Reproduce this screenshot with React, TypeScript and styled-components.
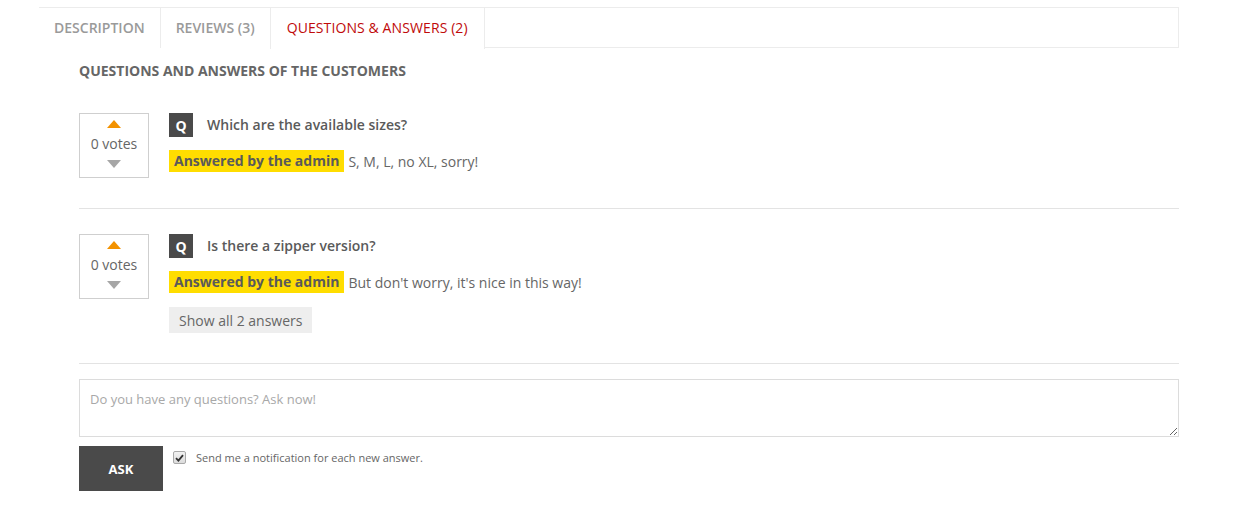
import React from "react";
import styled, { createGlobalStyle } from "styled-components";

const Global = createGlobalStyle`
  html, body { margin: 0; padding: 0; background: #fff; }
  body { font-family: "Open Sans", "Noto Sans", sans-serif; color: #666; }
  * { box-sizing: border-box; }
`;

const Page = styled.div`
  padding: 7px 0 0 39px;
  width: 1179px;
`;

const TabBar = styled.div`
  display: flex;
  height: 41px;
  border: 1px solid #ececec;
`;

const Tab = styled.div<{ $active?: boolean }>`
  display: flex;
  align-items: center;
  padding: 0 ${(p) => (p.$active ? "16px" : "15px")} ${(p) => (p.$active ? "3px" : "1px")};
  margin-left: -1px;
  border-left: 1px solid #ececec;
  border-right: 1px solid #ececec;
  font-size: 14px;
  font-weight: ${(p) => (p.$active ? 400 : 600)};
  letter-spacing: ${(p) => (p.$active ? "0.1px" : "0")};
  text-transform: uppercase;
  color: ${(p) => (p.$active ? "#c00a0a" : "#9a9a9a")};
  background: #fff;
  height: ${(p) => (p.$active ? "41px" : "40px")};
  margin-bottom: ${(p) => (p.$active ? "-1px" : "0")};
  &:first-child { border-left: none; padding-left: 15px; }
`;

const Content = styled.div`
  padding-left: 40px;
`;

const Heading = styled.h3`
  margin: 14px 0 0;
  font-size: 14px;
  font-weight: 700;
  line-height: 18px;
  color: #666;
  text-transform: uppercase;
`;

const Item = styled.div<{ $first?: boolean }>`
  display: flex;
  padding: ${(p) => (p.$first ? "33px" : "25px")} 0 30px;
  border-bottom: 1px solid #e3e3e3;
`;

const VoteBox = styled.div`
  width: 70px;
  height: 65px;
  flex: none;
  border: 1px solid #cfcfcf;
  display: flex;
  flex-direction: column;
  align-items: center;
  padding-top: 6px;
`;

const Arrow = styled.span<{ $up?: boolean }>`
  width: 0;
  height: 0;
  border-left: 7px solid transparent;
  border-right: 7px solid transparent;
  ${(p) =>
    p.$up
      ? "border-bottom: 8px solid #f39200;"
      : "border-top: 8px solid #a6a6a6;"}
`;

const Votes = styled.span`
  font-size: 14px;
  line-height: 20px;
  margin: 6px 0 6px;
  color: #666;
`;

const Body = styled.div`
  margin-left: 20px;
  display: flex;
  flex-direction: column;
  align-items: flex-start;
`;

const QRow = styled.div`
  display: flex;
  align-items: center;
`;

const QBadge = styled.span`
  width: 24px;
  height: 24px;
  background: #4a4a4a;
  color: #fff;
  font-weight: 700;
  font-size: 14px;
  display: flex;
  align-items: center;
  justify-content: center;
`;

const QText = styled.span`
  margin-left: 14px;
  font-size: 14px;
  font-weight: 600;
  color: #5a5a5a;
  margin-top: -2px;
`;

const ARow = styled.div`
  display: flex;
  align-items: center;
  margin-top: 13px;
`;

const ABadge = styled.span`
  background: #ffdd00;
  padding: 0 5px;
  height: 22px;
  line-height: 22px;
  font-size: 14px;
  font-weight: 700;
  color: #5a5a5a;
`;

const AText = styled.span`
  margin-left: 4px;
  font-size: 14px;
  color: #666;
`;

const ShowAll = styled.button`
  margin-top: 14px;
  background: #eeeeee;
  border: none;
  height: 26px;
  padding: 0 10px;
  font-family: inherit;
  font-size: 14px;
  color: #666;
`;

const Form = styled.div`
  padding-top: 15px;
`;

const TextArea = styled.textarea`
  display: block;
  width: 100%;
  height: 58px;
  border: 1px solid #dcdcdc;
  padding: 10px;
  font-family: inherit;
  font-size: 13px;
  resize: vertical;
  &::placeholder { color: #a8a8a8; }
`;

const Actions = styled.div`
  display: flex;
  align-items: flex-start;
  margin-top: 9px;
`;

const AskButton = styled.button`
  width: 84px;
  height: 45px;
  background: #4a4a4a;
  color: #fff;
  border: none;
  font-family: inherit;
  font-weight: 700;
  font-size: 13px;
`;

const Check = styled.label`
  display: flex;
  align-items: center;
  margin-left: 10px;
  margin-top: 4px;
  font-size: 11px;
  color: #666;
`;

const CheckBox = styled.span`
  width: 13px;
  height: 13px;
  margin-right: 10px;
  border: 1px solid #a9a9a9;
  border-radius: 2px;
  background: linear-gradient(#f2f2f2, #dcdcdc);
  display: flex;
  align-items: center;
  justify-content: center;
`;

const items = [
  { q: "Which are the available sizes?", a: "S, M, L, no XL, sorry!", more: false },
  { q: "Is there a zipper version?", a: "But don't worry, it's nice in this way!", more: true },
];

export default function App() {
  return (
    <>
      <Global />
      <Page>
        <TabBar>
          <Tab>Description</Tab>
          <Tab>Reviews (3)</Tab>
          <Tab $active>Questions &amp; Answers (2)</Tab>
        </TabBar>
        <Content>
          <Heading>Questions and answers of the customers</Heading>
          {items.map((it, i) => (
            <Item key={i} $first={i === 0}>
              <VoteBox>
                <Arrow $up />
                <Votes>0 votes</Votes>
                <Arrow />
              </VoteBox>
              <Body>
                <QRow>
                  <QBadge>Q</QBadge>
                  <QText>{it.q}</QText>
                </QRow>
                <ARow>
                  <ABadge>Answered by the admin</ABadge>
                  <AText>{it.a}</AText>
                </ARow>
                {it.more && <ShowAll>Show all 2 answers</ShowAll>}
              </Body>
            </Item>
          ))}
          <Form>
            <TextArea placeholder="Do you have any questions? Ask now!" />
            <Actions>
              <AskButton>ASK</AskButton>
              <Check>
                <CheckBox>
                  <svg width="9" height="8" viewBox="0 0 9 8">
                    <path d="M1 4.2 L3.4 6.6 L8 1.2" fill="none" stroke="#333" strokeWidth="1.8" />
                  </svg>
                </CheckBox>
                Send me a notification for each new answer.
              </Check>
            </Actions>
          </Form>
        </Content>
      </Page>
    </>
  );
}
